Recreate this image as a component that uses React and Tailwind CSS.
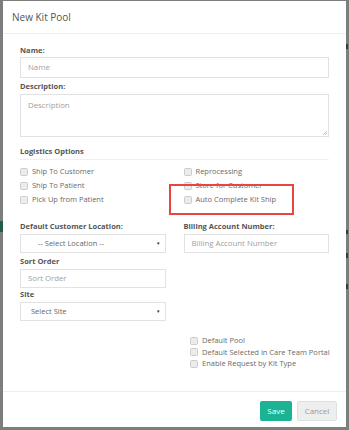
import React from "react";

const Check = ({ label, className = "h-[14px]" }) => (
  <div className={`flex items-center gap-[4px] whitespace-nowrap ${className}`}>
    <span className="w-[8px] h-[8px] rounded-[1.5px] border border-[#cccccc] bg-[#ececec] shrink-0" />
    <span className="text-[7.5px] text-[#6a6a6a] leading-none">{label}</span>
  </div>
);

const Label = ({ children }) => (
  <div className="text-[7.5px] font-bold text-[#555] leading-[12px] h-[12px] whitespace-nowrap">{children}</div>
);

const Input = ({ placeholder, h = "h-[21px]" }) => (
  <div className={`${h} border border-[#e2e2e2] bg-white flex items-center px-[7px] text-[7.8px] text-[#a0a0a0]`}>
    {placeholder}
  </div>
);

const Select = ({ text, pl }) => (
  <div className={`h-[19px] border border-[#e2e2e2] bg-white flex items-center justify-between ${pl} pr-[4px] text-[7.5px] text-[#666]`}>
    <span>{text}</span>
    <span className="text-[4.5px] text-[#333]">▼</span>
  </div>
);

export default function App() {
  return (
    <div
      className="relative w-[349px] h-[430px] bg-[#7d7d7d] overflow-hidden"
      style={{ fontFamily: '"Open Sans", "Liberation Sans", sans-serif' }}
    >
      {/* background fragments peeking around the modal */}
      <div className="absolute left-0 top-[221px] w-[3px] h-[11px] bg-[#1d5f4a]" />
      <div className="absolute left-[346px] top-[44px] w-[2px] h-[5px] bg-[#3a3a3a]" />
      <div className="absolute left-[346px] top-[230px] w-[2px] h-[4px] bg-[#3a3a3a]" />
      <div className="absolute left-[346px] top-[253px] w-[2px] h-[5px] bg-[#3a3a3a]" />
      <div className="absolute left-[346px] top-[284px] w-[2px] h-[5px] bg-[#3a3a3a]" />

      <div className="ml-[3px] mt-[1px] w-[343px] h-[426px] bg-white flex flex-col">
        {/* header */}
        <div className="h-[33px] border-b border-[#eeeeee] flex items-center px-[9px]">
          <span className="text-[10px] text-[#555]">New Kit Pool</span>
        </div>

        {/* body */}
        <div className="flex-1 px-[17px] pt-[10px]">
          <Label>Name:</Label>
          <div className="mt-[1px]">
            <Input placeholder="Name" />
          </div>
          <div className="mt-[2px]">
            <Label>Description:</Label>
          </div>
          <div className="mt-[2px] relative h-[43px] border border-[#e2e2e2] px-[7px] pt-[5px] text-[7.8px] text-[#a0a0a0]">
            Description
            <svg className="absolute right-[1px] bottom-[1px]" width="5" height="5" viewBox="0 0 5 5">
              <path d="M1 5 L5 1 M3 5 L5 3" stroke="#999" strokeWidth="0.6" />
            </svg>
          </div>

          <div className="mt-[8px]">
            <Label>Logistics Options</Label>
          </div>
          <div className="mt-[2px] border-t border-[#f0f0f0]" />

          <div className="relative mt-[5px] grid grid-cols-2 gap-x-[18px]">
            <div className="flex flex-col">
              <Check label="Ship To Customer" />
              <Check label="Ship To Patient" />
              <Check label="Pick Up from Patient" />
            </div>
            <div className="flex flex-col">
              <Check label="Reprocessing" />
              <Check label="Store for Customer" />
              <Check label="Auto Complete Kit Ship" />
            </div>
            <div className="absolute left-[149px] top-[19px] w-[125px] h-[31px] border-2 border-[#e5463f]" />
          </div>

          <div className="mt-[13px] grid grid-cols-2 gap-x-[18px]">
            <div>
              <Label>Default Customer Location:</Label>
              <div className="mt-[2px]">
                <Select text="-- Select Location --" pl="pl-[17px]" />
              </div>
              <div className="mt-[2px]">
                <Label>Sort Order</Label>
              </div>
              <div className="mt-[2px]">
                <Input placeholder="Sort Order" h="h-[19px]" />
              </div>
              <div className="mt-[0px]">
                <Label>Site</Label>
              </div>
              <div className="mt-[2px]">
                <Select text="Select Site" pl="pl-[10px]" />
              </div>
            </div>
            <div>
              <Label>Billing Account Number:</Label>
              <div className="mt-[2px]">
                <Input placeholder="Billing Account Number" h="h-[19px]" />
              </div>
            </div>
          </div>

          <div className="mt-[14px] ml-[170px] flex flex-col">
            <Check label="Default Pool" className="h-[11.5px]" />
            <Check label="Default Selected in Care Team Portal" className="h-[11.5px]" />
            <Check label="Enable Request by Kit Type" className="h-[11.5px]" />
          </div>
        </div>

        {/* footer */}
        <div className="h-[36px] border-t border-[#eeeeee] flex items-start justify-end gap-[5px] pr-[9px] pt-[9px]">
          <button className="w-[32px] h-[20px] rounded-[2px] bg-[#1ab394] text-white text-[8px]">Save</button>
          <button className="w-[40px] h-[20px] rounded-[2px] bg-[#eeeeee] border border-[#e0e0e0] text-[#999] text-[8px]">Cancel</button>
        </div>
      </div>
    </div>
  );
}
